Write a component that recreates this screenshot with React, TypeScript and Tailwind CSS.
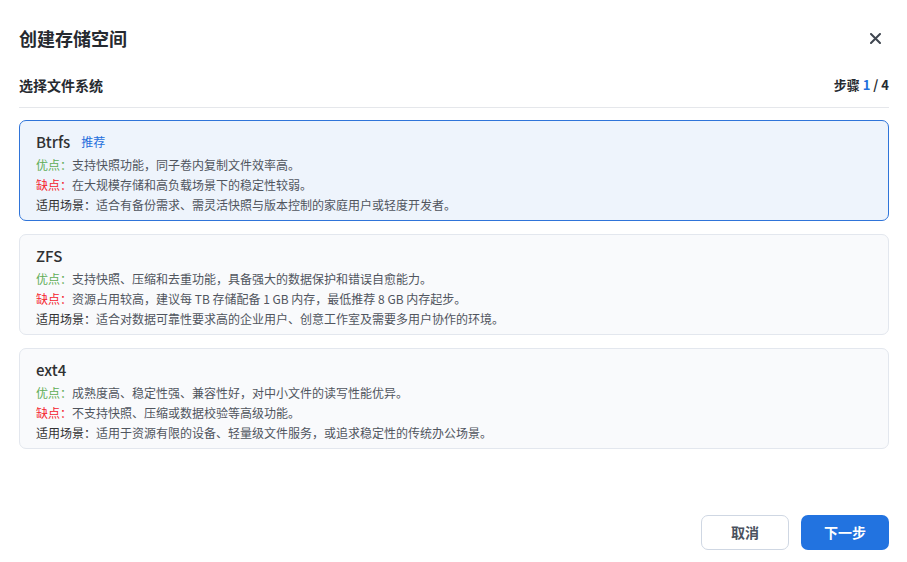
import React from "react";

type FS = {
  name: string;
  recommended?: boolean;
  pros: string;
  cons: string;
  scene: string;
};

const items: FS[] = [
  {
    name: "Btrfs",
    recommended: true,
    pros: "支持快照功能，同子卷内复制文件效率高。",
    cons: "在大规模存储和高负载场景下的稳定性较弱。",
    scene: "适合有备份需求、需灵活快照与版本控制的家庭用户或轻度开发者。",
  },
  {
    name: "ZFS",
    pros: "支持快照、压缩和去重功能，具备强大的数据保护和错误自愈能力。",
    cons: "资源占用较高，建议每 TB 存储配备 1 GB 内存，最低推荐 8 GB 内存起步。",
    scene: "适合对数据可靠性要求高的企业用户、创意工作室及需要多用户协作的环境。",
  },
  {
    name: "ext4",
    pros: "成熟度高、稳定性强、兼容性好，对中小文件的读写性能优异。",
    cons: "不支持快照、压缩或数据校验等高级功能。",
    scene: "适用于资源有限的设备、轻量级文件服务，或追求稳定性的传统办公场景。",
  },
];

function Card({ fs, selected }: { fs: FS; selected: boolean }) {
  return (
    <div
      className={
        selected
          ? "rounded-[7px] border border-[#2f74d9] bg-[#eef4fc] pl-[16px] pr-4 pt-[11px] pb-[5px]"
          : "rounded-[7px] border border-[#e3e7ee] bg-[#f9fafc] pl-[16px] pr-4 pt-[11px] pb-[5px]"
      }
    >
      <div className="flex h-5 items-center gap-[11px]">
        <span className="text-[15px] font-medium leading-5 text-[#303133]">{fs.name}</span>
        {fs.recommended && (
          <span className="text-[12px] leading-5 text-[#1f6fdc]">推荐</span>
        )}
      </div>
      <div className="mt-[3px] text-[12px] leading-5 text-[#50555e]">
        <div>
          <span className="text-[#5fad56]">优点：</span>
          {fs.pros}
        </div>
        <div>
          <span className="text-[#f5222d]">缺点：</span>
          {fs.cons}
        </div>
        <div>
          <span className="text-[#303133]">适用场景：</span>
          {fs.scene}
        </div>
      </div>
    </div>
  );
}

export default function App() {
  return (
    <div
      className="flex h-[562px] w-[907px] flex-col bg-white pl-[19px] pr-[18px] pb-[12px]"
      style={{ fontFamily: '"Noto Sans CJK SC", "Noto Sans", sans-serif' }}
    >
      <div className="flex h-6 items-center justify-between mt-[26px]">
        <h1 className="text-[18px] font-bold leading-6 text-[#262a30]">创建存储空间</h1>
        <button className="mr-[8px] flex h-[11px] w-[11px] items-center justify-center text-[#3f4650]">
          <svg width="11" height="11" viewBox="0 0 11 11" fill="none">
            <path d="M1 1L10 10M10 1L1 10" stroke="currentColor" strokeWidth="2" strokeLinecap="round" />
          </svg>
        </button>
      </div>

      <div className="mt-[25px] flex h-5 items-center justify-between border-b border-[#e5e7eb] box-content pb-[12px]">
        <span className="text-[14px] font-bold leading-5 text-[#262a30]">选择文件系统</span>
        <span className="text-[13px] font-bold leading-5 text-[#262a30]">
          步骤 <span className="text-[#1f6fdc]">1</span> / 4
        </span>
      </div>

      <div className="mt-[12px] flex flex-col gap-[13px]">
        {items.map((fs, i) => (
          <Card key={fs.name} fs={fs} selected={i === 0} />
        ))}
      </div>

      <div className="mt-auto flex justify-end gap-[12px]">
        <button className="h-[35px] w-[88px] rounded-[7px] border border-[#cfd7e3] bg-white text-[14px] font-bold text-[#4a5260]">
          取消
        </button>
        <button className="h-[35px] w-[88px] rounded-[7px] bg-[#2273e0] text-[14px] font-bold text-white">
          下一步
        </button>
      </div>
    </div>
  );
}
